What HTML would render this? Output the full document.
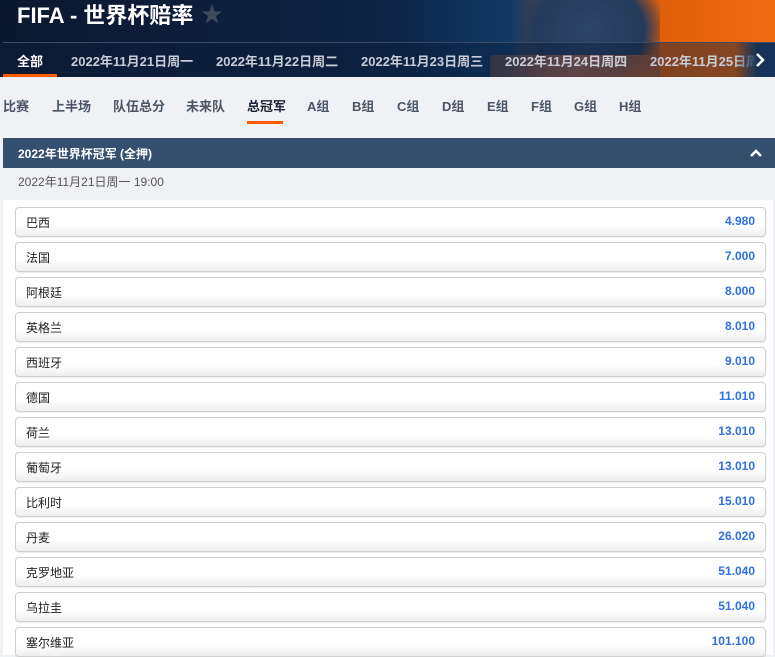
<!DOCTYPE html>
<html><head><meta charset="utf-8"><style>
*{margin:0;padding:0;box-sizing:border-box}
body{width:775px;height:655px;overflow:hidden;background:#f0f1f5;font-family:"Liberation Sans","Noto Sans CJK SC",sans-serif;position:relative}
.hdr{position:absolute;left:0;top:0;width:775px;height:77px;background:linear-gradient(90deg,#0b1830 0%,#0d2444 50%,#123a66 66%,#d85a08 78%,#f06a10 100%);overflow:hidden}
.player{position:absolute;left:520px;top:-10px;width:140px;height:100px;background:radial-gradient(ellipse at 50% 40%,#2e4668 0%,#233a5a 55%,rgba(30,50,80,0) 78%)}
.legs{position:absolute;left:490px;top:55px;width:170px;height:22px;background:linear-gradient(90deg,#5a4a48,#c07050 50%,#a05530);opacity:.8}
.title{position:absolute;left:17px;top:-2px;font-size:22px;font-weight:bold;color:#fff}
.star{position:absolute;left:201px;top:-3px;font-size:22px;color:#3e4a5e}
.line{position:absolute;left:3px;top:42px;width:772px;height:1px;background:#3a4a66}
.nav{position:absolute;top:43px;left:0;height:34px;width:775px;background:rgba(10,30,60,.45)}
.nav span{position:absolute;top:8px;font-size:13px;font-weight:bold;color:#c8ccd6;white-space:nowrap}
.nav .act{color:#fff}
.ul1{position:absolute;left:3px;top:74px;width:54px;height:3px;background:#ff5a00}
.arr{position:absolute;left:735px;top:43px;width:40px;height:34px;background:linear-gradient(90deg,rgba(20,40,70,0),#163258 55%)}
.tabs span{position:absolute;top:96px;font-size:13px;font-weight:bold;color:#4a5566}
.tabs .on{color:#1a2233}
.ul2{position:absolute;left:247px;top:121px;width:36px;height:3px;background:#ff5a00}
.sec{position:absolute;left:3px;top:138px;width:772px;height:30px;background:#34506e;color:#fff;font-size:12px;font-weight:bold;padding:7px 0 0 15px}
.date{position:absolute;left:18px;top:173px;font-size:12px;color:#555}
.white{position:absolute;left:3px;top:200px;width:770px;height:455px;background:#fff}
.row{position:absolute;left:15px;width:751px;height:30px;border:1px solid #cfcfcf;border-radius:4px;background:linear-gradient(#fff 60%,#eeeeee);box-shadow:0 1px 1px rgba(0,0,0,.08)}
.row .n{position:absolute;left:10px;top:6px;font-size:12px;color:#222}
.row .o{position:absolute;right:10px;top:6px;font-size:12px;font-weight:bold;color:#2f6fe0}
</style></head><body>
<div class="hdr"><div class="player"></div><div class="legs"></div>
<div class="title">FIFA - 世界杯赔率</div><div class="star">★</div>
<div class="line"></div>
<div class="nav">
<span class="act" style="left:17px">全部</span>
<span style="left:71px">2022年11月21日周一</span>
<span style="left:216px">2022年11月22日周二</span>
<span style="left:361px">2022年11月23日周三</span>
<span style="left:505px">2022年11月24日周四</span>
<span style="left:650px">2022年11月25日周五</span>
</div>
<div class="ul1"></div>
<div class="arr"><svg width="40" height="34"><path d="M22 11 L28 17 L22 23" stroke="#fff" stroke-width="2.5" fill="none"/></svg></div>
</div>
<div class="tabs">
<span style="left:3px">比赛</span><span style="left:52px">上半场</span><span style="left:113px">队伍总分</span><span style="left:186px">未来队</span><span class="on" style="left:247px">总冠军</span><span style="left:307px">A组</span><span style="left:352px">B组</span><span style="left:397px">C组</span><span style="left:442px">D组</span><span style="left:487px">E组</span><span style="left:531px">F组</span><span style="left:574px">G组</span><span style="left:619px">H组</span>
</div>
<div class="ul2"></div>
<div class="sec">2022年世界杯冠军 (全押)<svg style="position:absolute;left:746px;top:9px" width="14" height="12"><path d="M2 9 L7 4 L12 9" stroke="#fff" stroke-width="2.5" fill="none"/></svg></div>
<div class="date">2022年11月21日周一 19:00</div>
<div class="white"></div>
<div class="row" style="top:207px"><span class="n">巴西</span><span class="o">4.980</span></div>
<div class="row" style="top:242px"><span class="n">法国</span><span class="o">7.000</span></div>
<div class="row" style="top:277px"><span class="n">阿根廷</span><span class="o">8.000</span></div>
<div class="row" style="top:312px"><span class="n">英格兰</span><span class="o">8.010</span></div>
<div class="row" style="top:347px"><span class="n">西班牙</span><span class="o">9.010</span></div>
<div class="row" style="top:382px"><span class="n">德国</span><span class="o">11.010</span></div>
<div class="row" style="top:417px"><span class="n">荷兰</span><span class="o">13.010</span></div>
<div class="row" style="top:452px"><span class="n">葡萄牙</span><span class="o">13.010</span></div>
<div class="row" style="top:487px"><span class="n">比利时</span><span class="o">15.010</span></div>
<div class="row" style="top:522px"><span class="n">丹麦</span><span class="o">26.020</span></div>
<div class="row" style="top:557px"><span class="n">克罗地亚</span><span class="o">51.040</span></div>
<div class="row" style="top:592px"><span class="n">乌拉圭</span><span class="o">51.040</span></div>
<div class="row" style="top:627px"><span class="n">塞尔维亚</span><span class="o">101.100</span></div>
</body></html>
